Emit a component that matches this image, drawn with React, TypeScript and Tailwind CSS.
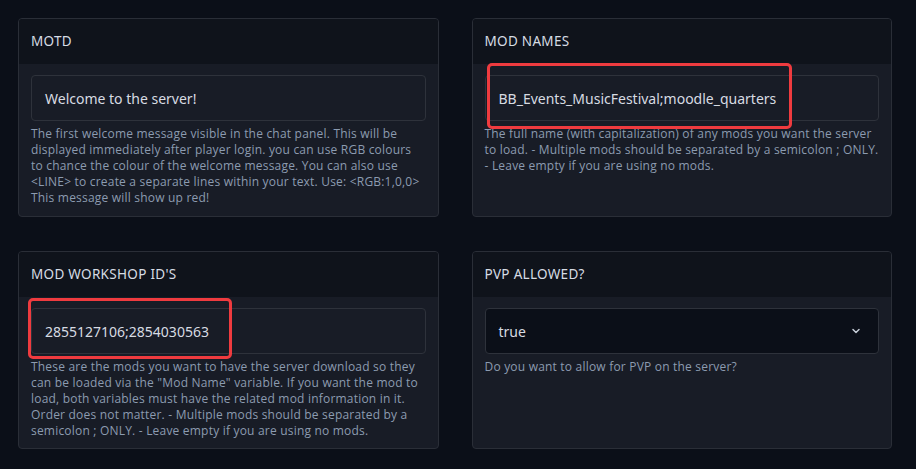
import { ChevronDown } from "lucide-react";
import type { ReactNode } from "react";

const helpFont = { fontFamily: "'Open Sans', 'Noto Sans', sans-serif" };

const Card = ({ title, children }: { title: string; children: ReactNode }) => (
    <div className="relative h-full flex flex-col rounded-[4px] border border-[#2a2e37] bg-[#181c26] overflow-hidden">
        <div className="h-[45px] shrink-0 flex items-center px-3 bg-[#0f131b] text-[13.5px] font-normal text-[#d6dce4] tracking-[0.3px]">
            {title}
        </div>
        <div className="flex flex-col px-3 pt-[11px]">{children}</div>
    </div>
);

const TextField = ({ value }: { value: string }) => (
    <div className="h-[46px] flex items-center px-[13px] rounded-[4px] border border-[#2e323b] bg-[#181c26] text-[14px] text-[#d7dbe2]">
        {value}
    </div>
);

const Help = ({ children }: { children: ReactNode }) => (
    <p className="mt-[5px] text-[12px] leading-[16px] tracking-[0.2px] text-[#8c9bb0]" style={helpFont}>
        {children}
    </p>
);

const Marker = ({ className }: { className: string }) => (
    <div className={`absolute border-[3px] border-[#ef3b3f] rounded-[5px] pointer-events-none ${className}`} />
);

export default function App() {
    return (
        <div
            className="min-h-[469px] w-[916px] bg-[#0b0f18] pl-[18px] pr-[24px] pt-[18px]"
            style={{ fontFamily: "'Noto Sans', 'Open Sans', sans-serif" }}
        >
            <div className="grid grid-cols-2 grid-rows-[199px_198px] gap-x-[33px] gap-y-[34px]">
                <Card title="MOTD">
                    <TextField value="Welcome to the server!" />
                    <Help>
                        The first welcome message visible in the chat panel. This will be displayed immediately after
                        player login. you can use RGB colours to chance the colour of the welcome message. You can also
                        use &lt;LINE&gt; to create a separate lines within your text. Use: &lt;RGB:1,0,0&gt; This message
                        will show up red!
                    </Help>
                </Card>

                <div className="relative">
                    <Card title="MOD NAMES">
                        <TextField value="BB_Events_MusicFestival;moodle_quarters" />
                        <Help>
                            The full name (with capitalization) of any mods you want the server to load. - Multiple
                            mods should be separated by a semicolon ; ONLY. - Leave empty if you are using no mods.
                        </Help>
                    </Card>
                    <Marker className="left-[15px] top-[45px] w-[305px] h-[66px]" />
                </div>

                <div className="relative">
                    <Card title="MOD WORKSHOP ID'S">
                        <TextField value="2855127106;2854030563" />
                        <Help>
                            These are the mods you want to have the server download so they can be loaded via the "Mod
                            Name" variable. If you want the mod to load, both variables must have the related mod
                            information in it. Order does not matter. - Multiple mods should be separated by a semicolon ;
                            ONLY. - Leave empty if you are using no mods.
                        </Help>
                    </Card>
                    <Marker className="left-[10px] top-[47px] w-[204px] h-[61px]" />
                </div>

                <Card title="PVP ALLOWED?">
                    <div className="h-[46px] flex items-center justify-between pl-[13px] pr-[16px] rounded-[4px] border border-[#2e323b] bg-[#0b0f18] text-[14px] text-[#d7dbe2]">
                        <span>true</span>
                        <ChevronDown className="w-3 h-3 text-[#c5ccd6]" strokeWidth={3} />
                    </div>
                    <Help>Do you want to allow for PVP on the server?</Help>
                </Card>
            </div>
        </div>
    );
}
